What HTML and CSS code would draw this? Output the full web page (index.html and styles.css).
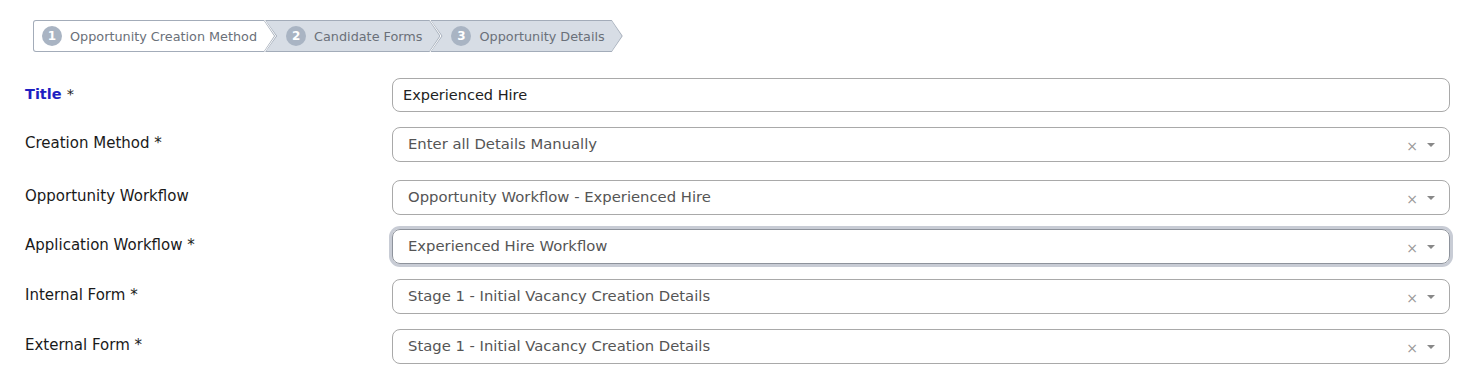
FILE: index.html
```html
<!DOCTYPE html>
<html lang="en">
<head>
    <meta charset="UTF-8">
    <meta name="viewport" content="width=device-width, initial-scale=1.0">
    <title>Opportunity Creation</title>
    <link rel="stylesheet" href="styles.css">
</head>
<body>
    <div class="wizard">
        <div class="step step-first active">
            <div class="step-inner"><span class="num">1</span>Opportunity Creation Method</div>
        </div>
        <div class="step">
            <div class="step-inner"><span class="num">2</span>Candidate Forms</div>
        </div>
        <div class="step">
            <div class="step-inner"><span class="num">3</span>Opportunity Details</div>
        </div>
    </div>

    <form class="form">
        <div class="row row-title">
            <label class="label label-focus" for="title">Title <span class="req">*</span></label>
            <input class="text-input" id="title" type="text" value="Experienced Hire">
        </div>

        <div class="row row-method">
            <label class="label">Creation Method *</label>
            <div class="select">
                <span class="value">Enter all Details Manually</span>
                <span class="clear">&times;</span>
                <span class="caret"></span>
            </div>
        </div>

        <div class="row row-tight">
            <label class="label">Opportunity Workflow</label>
            <div class="select">
                <span class="value">Opportunity Workflow - Experienced Hire</span>
                <span class="clear">&times;</span>
                <span class="caret"></span>
            </div>
        </div>

        <div class="row">
            <label class="label">Application Workflow *</label>
            <div class="select focused">
                <span class="value">Experienced Hire Workflow</span>
                <span class="clear">&times;</span>
                <span class="caret"></span>
            </div>
        </div>

        <div class="row">
            <label class="label">Internal Form *</label>
            <div class="select">
                <span class="value">Stage 1 - Initial Vacancy Creation Details</span>
                <span class="clear">&times;</span>
                <span class="caret"></span>
            </div>
        </div>

        <div class="row">
            <label class="label">External Form *</label>
            <div class="select">
                <span class="value">Stage 1 - Initial Vacancy Creation Details</span>
                <span class="clear">&times;</span>
                <span class="caret"></span>
            </div>
        </div>
    </form>
</body>
</html>
```

FILE: styles.css
```css
body {
    margin: 0;
    padding: 20px 14px 0 25px;
    background: #fff;
    font-family: 'DejaVu Sans', sans-serif;
    color: #222;
}

/* Barra de pasos */
.wizard {
    display: flex;
    margin-left: 8px;
    height: 32px;
}

.step {
    background: #a3acb9;
    padding: 1px 0 1px 1px;
    clip-path: polygon(0 0, calc(100% - 11px) 0, 100% 50%, calc(100% - 11px) 100%, 0 100%, 11px 50%);
    margin-left: -10px;
}

.step-first {
    margin-left: 0;
    border-radius: 3px 0 0 3px;
    clip-path: polygon(0 0, calc(100% - 11px) 0, 100% 50%, calc(100% - 11px) 100%, 0 100%);
}

.step-inner {
    height: 100%;
    display: flex;
    align-items: center;
    gap: 8px;
    padding: 0 18px 0 20px;
    background: #d7dde5;
    color: #6a7079;
    font-size: 12.8px;
    clip-path: polygon(0 0, calc(100% - 11px) 0, calc(100% - 1px) 50%, calc(100% - 11px) 100%, 0 100%, 11px 50%);
}

.step-first .step-inner {
    padding-left: 8px;
    padding-right: 18px;
    background: #fff;
    border-radius: 2px 0 0 2px;
    clip-path: polygon(0 0, calc(100% - 11px) 0, calc(100% - 1px) 50%, calc(100% - 11px) 100%, 0 100%);
}

.num {
    width: 20px;
    height: 20px;
    border-radius: 50%;
    background: #a9b4c3;
    color: #fff;
    font-weight: bold;
    font-size: 12px;
    display: flex;
    align-items: center;
    justify-content: center;
}

/* Formulario */
.form {
    margin-top: 26px;
}

.row {
    display: flex;
    align-items: center;
    height: 35px;
    margin-bottom: 15px;
}

.row-title {
    height: 34px;
    margin-bottom: 15px;
}

.row-method {
    margin-bottom: 18px;
}

.row-tight {
    margin-bottom: 14px;
}

.label {
    width: 367px;
    flex-shrink: 0;
    font-size: 15px;
    color: #1a1a1a;
    margin-top: -3px;
}

.label-focus {
    color: #1f1fc2;
    font-weight: bold;
    font-size: 14.5px;
}

.label-focus .req {
    color: #222;
    font-weight: normal;
}

.text-input {
    flex: 1;
    height: 34px;
    box-sizing: border-box;
    border: 1px solid #a9a9a9;
    border-radius: 8px;
    padding: 0 10px;
    font-family: inherit;
    font-size: 14.5px;
    color: #222;
    outline: none;
}

.select {
    flex: 1;
    height: 35px;
    box-sizing: border-box;
    border: 1px solid #a9a9a9;
    border-radius: 8px;
    display: flex;
    align-items: center;
    padding: 0 14px 0 15px;
}

.select.focused {
    border-color: #8e939c;
    box-shadow: 0 0 0 3px #c8ccd5;
}

.value {
    flex: 1;
    font-size: 14.8px;
    color: #555;
    margin-top: -2px;
}

.clear {
    color: #999;
    font-size: 14px;
    margin-right: 9px;
    margin-top: 3px;
}

.caret {
    width: 0;
    height: 0;
    border-left: 4px solid transparent;
    border-right: 4px solid transparent;
    border-top: 4px solid #888;
}
```
